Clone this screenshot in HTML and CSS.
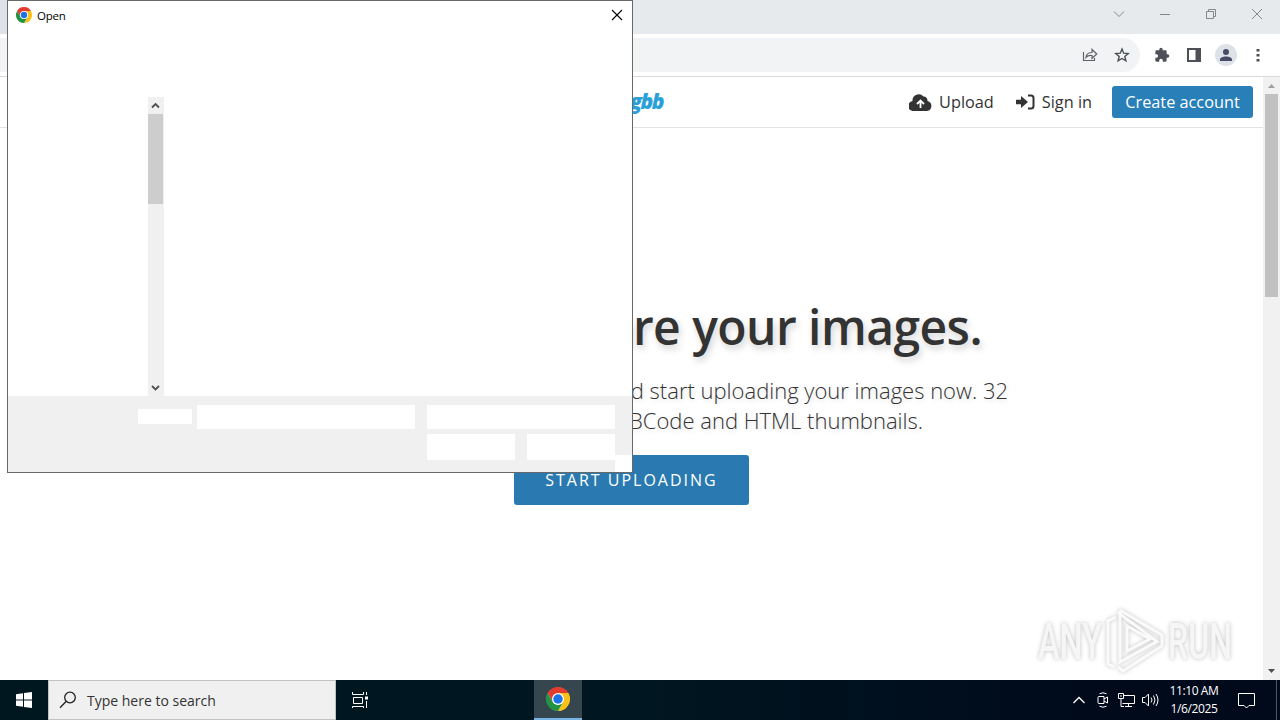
FILE: index.html
```html
<!DOCTYPE html>
<html lang="en">

<head>
  <meta charset="UTF-8" />
  <meta name="viewport" content="width=device-width, initial-scale=1.0" />
  <title>imgbb</title>
  <link rel="stylesheet" href="styles.css">
</head>

<body>

  <svg class="defs" width="0" height="0">
    <symbol id="chrome" viewBox="0 0 48 48">
      <circle cx="24" cy="24" r="23" fill="#fff" />
      <path fill="#e33b2e" d="M3.2 12A24 24 0 0 1 44.8 12H24L13.600 30Z" />
      <path fill="#fbc116" d="M24 12H44.8A24 24 0 0 1 24 48L34.4 30Z" />
      <path fill="#229342" d="M3.2 12 13.6 30Q24 40 34.4 30L24 48A24 24 0 0 1 3.2 12Z" />
      <circle cx="24" cy="24" r="12" fill="#fff" />
      <circle cx="24" cy="24" r="9.5" fill="#1a73e8" />
    </symbol>
  </svg>

  <!-- Browser window -->
  <div class="tabstrip">
    <div class="tab-edge"></div>
    <div class="window-buttons">
      <svg width="12" height="12" viewBox="0 0 12 12"><path d="M1 3.5 6 8.5 11 3.5" /></svg>
      <svg width="12" height="12" viewBox="0 0 12 12"><path d="M1 6.5H11" /></svg>
      <svg width="12" height="12" viewBox="0 0 12 12"><path d="M1.5 3.5H8.5V10.500H1.500ZM3.500 3.500V1.500H10.500V8.500H8.500" /></svg>
      <svg width="12" height="12" viewBox="0 0 12 12"><path d="M1 1 11 11M11 1 1 11" /></svg>
    </div>
  </div>

  <div class="toolbar">
    <div class="omnibox">
      <svg width="16" height="16" viewBox="0 0 16 16"><path d="M1.500 5V13.500H12.500V11M4 10.500Q4.500 5.500 10 5.500V2.500L14.800 7 10 11.300V8.500Q6 8 4 10.500Z" fill="none" stroke="#5f6368" stroke-width="1.200" /></svg>
      <svg width="16" height="16" viewBox="0 0 16 16"><path d="M8 2 9.700 6.200 14.200 6.500 10.800 9.400 11.900 13.800 8 11.500 4.100 13.800 5.200 9.400 1.800 6.500 6.300 6.200Z" fill="none" stroke="#4a4f55" stroke-width="1.400" /></svg>
    </div>
    <svg width="16" height="16" viewBox="0 0 24 24"><path fill="#4d5157" d="M20.500 11H19V7a2 2 0 0 0-2-2h-4V3.500a2.500 2.500 0 0 0-5 0V5H4a2 2 0 0 0-2 2v3.800h1.500a2.700 2.700 0 0 1 0 5.400H2V20a2 2 0 0 0 2 2h3.800v-1.500a2.700 2.700 0 0 1 5.400 0V22H17a2 2 0 0 0 2-2v-4h1.500a2.500 2.500 0 0 0 0-5z" /></svg>
    <svg width="16" height="16" viewBox="0 0 16 16"><path fill="#4d5157" fill-rule="evenodd" d="M1 1H15V15H1ZM3 3V13H9.500V3Z" /></svg>
    <div class="avatar">
      <svg width="14" height="14" viewBox="0 0 14 14"><path fill="#474b66" d="M7 1a3 3 0 1 1 0 6 3 3 0 0 1 0-6ZM1 13V11.500C1 7.500 13 7.500 13 11.500V13Z" /></svg>
    </div>
    <svg width="4" height="16" viewBox="0 0 4 16"><path fill="#4d5157" d="M.5 2h3v2.500h-3zM.5 7h3v2.500h-3zM.5 12h3v2.500h-3z" /></svg>
  </div>

  <div class="viewport">
    <div class="page">
      <div class="top-bar">
        <span class="logo">gbb</span>
        <div class="nav">
          <a class="nav-link">
            <svg width="23" height="17" viewBox="0 0 23 17"><path fill="#333" d="M18.500 7A4.300 4.300 0 0 0 14.500 2.600 6.200 6.200 0 0 0 3.500 7 5 5 0 0 0 5 17H18A5.100 5.100 0 0 0 18.500 7Z" /><path d="M11.500 14V7M8 10 11.500 6.500 15 10" fill="none" stroke="#fff" stroke-width="1.800" /></svg>
            <span>Upload</span>
          </a>
          <a class="nav-link">
            <svg width="19" height="16" viewBox="0 0 19 16"><path fill="#333" d="M0 5.800H5V2L12 8 5 14V10.200H0Z" /><path d="M12 1.500H15Q17.500 1.500 17.500 4V12Q17.500 14.500 15 14.500H12" fill="none" stroke="#333" stroke-width="2" /></svg>
            <span>Sign in</span>
          </a>
          <a class="btn-account">Create account</a>
        </div>
      </div>

      <div class="hero">
        <h1>share your images.</h1>
        <p class="line-one">and start uploading your images now. 32</p>
        <p class="line-two">BBCode and HTML thumbnails.</p>
        <a class="btn-upload">START UPLOADING</a>
      </div>
    </div>

    <div class="scrollbar">
      <svg width="17" height="17" viewBox="0 0 17 17"><path fill="#a0a0a0" d="M5 11H12L8.500 7Z" /></svg>
      <div class="thumb"></div>
      <svg class="down" width="17" height="17" viewBox="0 0 17 17"><path fill="#505050" d="M5 6H12L8.500 10Z" /></svg>
    </div>
  </div>

  <!-- Taskbar -->
  <div class="taskbar">
    <div class="start">
      <svg width="16" height="16" viewBox="0 0 16 16"><path fill="#fff" d="M0 2.300 7 1.200V7.500H0ZM8 1.100 16 0V7.500H8ZM0 8.500H7V14.800L0 13.700ZM8 8.500H16V16L8 14.900Z" /></svg>
    </div>
    <div class="search">
      <svg width="18" height="18" viewBox="0 0 18 18"><circle cx="11" cy="6.500" r="5.300" /><path d="M7.300 10.300 1 16.700" /></svg>
      <span>Type here to search</span>
    </div>
    <svg class="task-view" width="17" height="16" viewBox="0 0 17 16"><path d="M.5 0V2.500H11.500V0M1.500 5.500H10.500V11.500H1.500ZM.5 16V14.500H11.500V16M14.500 0V3M14.500 9V16" /><path fill="#fff" stroke="none" d="M13 4.500h3v3h-3z" /></svg>
    <div class="task-app">
      <svg width="24" height="24"><use href="#chrome" /></svg>
    </div>
    <div class="tray">
      <svg width="14" height="16" viewBox="0 0 14 16"><path d="M1.500 11 7 5.500 12.500 11" stroke-width="1.300" /></svg>
      <svg width="14" height="16" viewBox="0 0 14 16"><path d="M3.500 1.800Q7 -.3 10.500 1.800M3.500 14.200Q7 16.300 10.500 14.200M2 5.500Q2 4.500 3 4.500H8V11.500H3Q2 11.500 2 10.500ZM8 7 11.500 5V11L8 9" /></svg>
      <svg width="17" height="16" viewBox="0 0 17 16"><path d="M6 3.500H16.500V11.500H4.500M10.500 11.500V14.500M7 14.500H14M.5 1.500H5.500V6.500H.5ZM3 6.500V14.500H6M2 4H4" /></svg>
      <svg width="17" height="16" viewBox="0 0 17 16"><path d="M.5 5.500H3L6.500 2V14L3 10.500H.5ZM9 5.500Q11 8 9 10.500M11.500 3.500Q14.500 8 11.500 12.500M14 2Q18 8 14 14" /></svg>
      <div class="clock">
        <div>11:10 AM</div>
        <div>1/6/2025</div>
      </div>
      <svg width="17" height="17" viewBox="0 0 17 17"><path d="M.5 1.500H16.500V13.500H11L8.500 16 6 13.500H.5Z" /></svg>
      <div class="show-desktop"></div>
    </div>
  </div>

  <!-- File dialog -->
  <div class="dialog">
    <div class="dialog-title">
      <svg width="16" height="16"><use href="#chrome" /></svg>
      <span>Open</span>
      <svg class="close" width="12" height="12" viewBox="0 0 12 12"><path d="M1 1 11 11M11 1 1 11" /></svg>
    </div>
    <div class="dialog-body">
      <div class="dialog-scroll">
        <svg width="15" height="17" viewBox="0 0 15 17"><path d="M4 10.500 7.500 7 11 10.500" /></svg>
        <div class="thumb"></div>
        <svg class="down" width="15" height="17" viewBox="0 0 15 17"><path d="M4 7 7.500 10.500 11 7" /></svg>
      </div>
    </div>
    <div class="dialog-footer">
      <div class="file-label"></div>
      <div class="file-name"></div>
      <div class="file-actions">
        <div class="file-type"></div>
        <div></div>
        <div></div>
      </div>
      <div class="grip"></div>
    </div>
  </div>

  <!-- Watermark -->
  <svg class="watermark" width="220" height="80" viewBox="0 0 220 80">
    <g class="mark-text">
      <text x="9" y="55" textLength="64" lengthAdjust="spacingAndGlyphs">ANY</text>
      <text x="139" y="55" textLength="64" lengthAdjust="spacingAndGlyphs">RUN</text>
    </g>
    <g class="mark-play">
      <path d="M87 13 79 17V60L85 63M89 10 92 7 133 31V42L94 67 89 63" />
      <path d="M91 10V58L128 37.500Z" />
      <path d="M98 22V47L121 35Z" />
    </g>
  </svg>

</body>

</html>
```

FILE: styles.css
```css
:root {
  --blue: #2980b9;
  --text-color: #333;
  --grey: #f0f0f0;
}

* {
  box-sizing: border-box;
}

body {
  position: relative;
  display: flex;
  flex-direction: column;
  width: 1280px;
  height: 720px;
  margin: 0;
  overflow: hidden;
  background-color: #fff;
  color: var(--text-color);
  font-family: "Open Sans", "Noto Sans", sans-serif;
}

svg {
  display: block;
  flex: none;
}

.defs {
  position: absolute;
}

/* browser */
.tabstrip {
  display: flex;
  justify-content: space-between;
  height: 34px;
  background-color: #e7eaed;
}

.tab-edge {
  width: 30px;
  background-color: #dfe1e8;
  border-bottom-right-radius: 8px;
}

.window-buttons {
  display: flex;
  gap: 34px;
  padding: 8px 17px 0 0;
}

.window-buttons svg {
  fill: none;
  stroke: #85888b;
}

.toolbar {
  display: flex;
  align-items: center;
  height: 43px;
  padding-right: 20px;
  border-bottom: 1px solid #d9dadc;
}

.omnibox {
  display: flex;
  align-items: center;
  justify-content: flex-end;
  gap: 16px;
  flex: none;
  width: 1140px;
  height: 34px;
  margin-right: 14px;
  padding-right: 10px;
  border-radius: 0 17px 17px 0;
  background-color: #f1f3f5;
}

.toolbar > svg {
  margin-right: 16px;
}

.toolbar > svg:last-child {
  margin: 0;
}

.avatar {
  display: flex;
  flex: none;
  align-items: center;
  justify-content: center;
  width: 22px;
  height: 22px;
  margin: 0 19px 0 -3px;
  border-radius: 50%;
  background-color: #dee1e8;
}

.viewport {
  display: flex;
  height: 603px;
}

.page {
  width: 1263px;
}

.scrollbar {
  display: flex;
  flex-direction: column;
  width: 17px;
  background-color: #f1f1f1;
}

.scrollbar .thumb {
  width: 13px;
  height: 203px;
  margin-left: 2px;
  background-color: #c1c1c1;
}

.down {
  margin-top: auto;
}

.top-bar {
  display: flex;
  align-items: center;
  height: 51px;
  border-bottom: 1px solid #e2e2e2;
}

.logo {
  width: 663px;
  margin-top: -3px;
  color: #2ba0d8;
  font-size: 21px;
  font-style: italic;
  font-weight: 800;
  letter-spacing: -1.500px;
  text-align: right;
}

.nav {
  display: flex;
  flex: 1;
  align-items: center;
  justify-content: flex-end;
  padding-right: 10px;
  font-size: 16.300px;
}

.nav-link {
  display: flex;
  align-items: center;
  gap: 7px;
  margin-right: 22px;
}

.nav-link + .btn-account {
  margin-left: -2px;
}

.nav-link span {
  margin-top: -1px;
}

.btn-account {
  width: 141px;
  height: 32px;
  border-radius: 3px;
  background-color: var(--blue);
  color: #fff;
  line-height: 32px;
  text-align: center;
}

.hero {
  padding-top: 165px;
  text-align: right;
  white-space: nowrap;
}

.hero h1 {
  margin: 0;
  padding-right: 281px;
  font-size: 48px;
  font-weight: 600;
  line-height: 68px;
  letter-spacing: -0.550px;
  text-shadow: 2px 4px 7px rgba(0, 0, 0, 0.18);
}

.hero p {
  margin: 0;
  font-size: 22px;
  font-weight: 300;
  line-height: 30px;
  text-shadow: 1px 2px 5px rgba(0, 0, 0, 0.15);
}

.hero .line-one {
  margin-top: 14px;
  padding-right: 255px;
}

.hero .line-two {
  padding-right: 340px;
}

.btn-upload {
  display: block;
  width: 235px;
  height: 50px;
  margin: 20px 0 0 514px;
  border-radius: 3px;
  background-color: #2a7ab1;
  color: #fff;
  font-size: 16px;
  font-weight: 400;
  letter-spacing: 2px;
  line-height: 50px;
  text-align: center;
}

/* taskbar */
.taskbar {
  display: flex;
  align-items: center;
  height: 40px;
  background: linear-gradient(90deg, #001720, #001620 50%, #000a1b 85%);
  color: #fff;
}

.start {
  display: flex;
  justify-content: center;
  width: 48px;
}

.search {
  display: flex;
  align-items: center;
  gap: 10px;
  width: 288px;
  height: 40px;
  padding-left: 10px;
  border: 1px solid #bfc2c3;
  background-color: var(--grey);
  color: #333;
  font-size: 14px;
}

.search svg {
  fill: none;
  stroke: #222;
  stroke-width: 1.300;
}

.task-view {
  margin: 0 165px 0 16px;
  fill: none;
  stroke: #fff;
}

.task-app {
  display: flex;
  align-items: center;
  justify-content: center;
  width: 48px;
  height: 40px;
  border-bottom: 2px solid #76b4e4;
  background-color: #35464f;
}

.tray {
  display: flex;
  flex: 1;
  align-items: center;
  justify-content: flex-end;
  gap: 10px;
  height: 40px;
}

.tray svg {
  fill: none;
  stroke: #fff;
}

.tray > svg:nth-child(3) {
  margin-left: -2px;
}

.tray > svg:nth-child(4) {
  margin-left: -3px;
}

.clock {
  width: 50px;
  margin-right: 9px;
  font-size: 12px;
  letter-spacing: -0.400px;
  line-height: 18px;
  text-align: center;
  white-space: nowrap;
}

.show-desktop {
  width: 4px;
  height: 40px;
  margin-left: 11px;
  border-left: 1px solid #4d5563;
}

/* dialog */
.dialog {
  position: absolute;
  top: 0;
  left: 7px;
  display: flex;
  flex-direction: column;
  width: 626px;
  height: 473px;
  border: 1px solid #696969;
  background-color: #fff;
}

.dialog-title {
  display: flex;
  align-items: center;
  gap: 5px;
  height: 28px;
  padding: 0 9px 0 8px;
  color: #000;
  font-size: 11.500px;
  letter-spacing: -0.200px;
}

.close {
  margin-left: auto;
  fill: none;
  stroke: #000;
  stroke-width: 1.100;
}

.dialog-body {
  flex: 1;
  display: flex;
  padding: 68px 0 0 140px;
}

.dialog-scroll {
  display: flex;
  flex-direction: column;
  width: 16px;
  background-color: var(--grey);
}

.dialog-scroll svg {
  fill: none;
  stroke: #505050;
  stroke-width: 1.800;
}

.dialog-scroll .thumb {
  width: 15px;
  height: 90px;
  background-color: #cdcdcd;
}

.dialog-footer {
  display: flex;
  align-items: flex-start;
  height: 76px;
  padding: 9px 0 0 130px;
  background-color: var(--grey);
}

.file-label {
  width: 54px;
  height: 15px;
  margin: 4px 5px 0 0;
  background-color: #fff;
}

.file-name {
  width: 218px;
  height: 24px;
  margin-right: 12px;
  background-color: #fff;
}

.file-actions {
  display: grid;
  grid-template-columns: 88px 88px;
  grid-template-rows: 24px 26px;
  gap: 5px 12px;
}

.file-actions div {
  background-color: #fff;
}

.file-type {
  grid-column: span 2;
}

.grip {
  align-self: flex-end;
  width: 17px;
  height: 17px;
  background-color: #fff;
}

/* watermark */
.watermark {
  position: absolute;
  top: 604px;
  left: 1029px;
  overflow: visible;
  filter: drop-shadow(0 0 2px rgba(0, 0, 0, 0.25));
}

.mark-text {
  fill: #f6f6f6;
  font-family: Roboto, sans-serif;
  font-size: 50px;
  font-weight: 500;
}

.mark-play {
  fill: none;
  stroke: #fafafa;
  stroke-width: 3;
}
```
